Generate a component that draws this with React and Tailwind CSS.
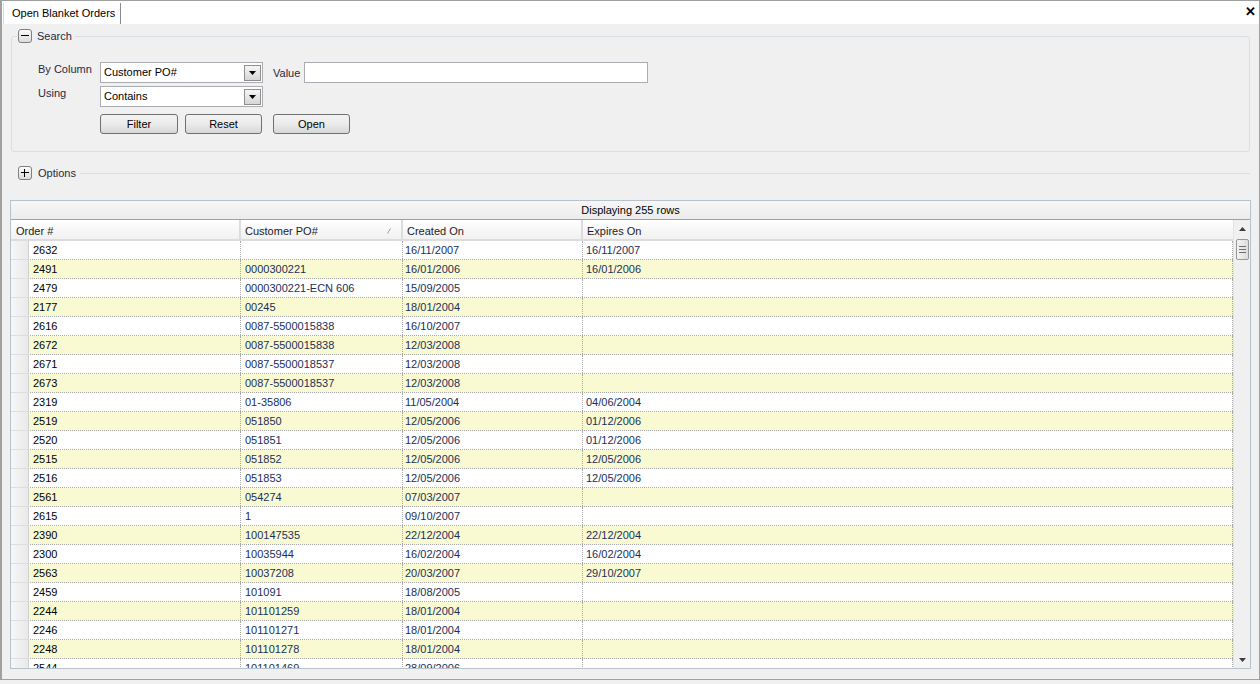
import React from "react";

const rows = [
  ["2632", "", "16/11/2007", "16/11/2007"],
  ["2491", "0000300221", "16/01/2006", "16/01/2006"],
  ["2479", "0000300221-ECN 606", "15/09/2005", ""],
  ["2177", "00245", "18/01/2004", ""],
  ["2616", "0087-5500015838", "16/10/2007", ""],
  ["2672", "0087-5500015838", "12/03/2008", ""],
  ["2671", "0087-5500018537", "12/03/2008", ""],
  ["2673", "0087-5500018537", "12/03/2008", ""],
  ["2319", "01-35806", "11/05/2004", "04/06/2004"],
  ["2519", "051850", "12/05/2006", "01/12/2006"],
  ["2520", "051851", "12/05/2006", "01/12/2006"],
  ["2515", "051852", "12/05/2006", "12/05/2006"],
  ["2516", "051853", "12/05/2006", "12/05/2006"],
  ["2561", "054274", "07/03/2007", ""],
  ["2615", "1", "09/10/2007", ""],
  ["2390", "100147535", "22/12/2004", "22/12/2004"],
  ["2300", "10035944", "16/02/2004", "16/02/2004"],
  ["2563", "10037208", "20/03/2007", "29/10/2007"],
  ["2459", "101091", "18/08/2005", ""],
  ["2244", "101101259", "18/01/2004", ""],
  ["2246", "101101271", "18/01/2004", ""],
  ["2248", "101101278", "18/01/2004", ""],
  ["2544", "101101469", "28/09/2006", ""],
];

function Toggle({ plus }) {
  return (
    <span className="w-[14px] h-[14px] rounded-[3px] border border-[#7f7f7f] bg-gradient-to-b from-[#fbfbfb] to-[#dcdcdc] flex items-center justify-center shrink-0">
      <svg width="8" height="8" viewBox="0 0 8 8" shapeRendering="crispEdges">
        <rect x="0" y="3" width="8" height="1" fill="#000" />
        {plus && <rect x="3" y="0" width="1" height="8" fill="#000" />}
      </svg>
    </span>
  );
}

function Combo({ text }) {
  return (
    <div className="w-[163px] h-[21px] border border-[#abadb3] bg-white flex items-center pl-[3px] pr-[1px]">
      <span className="flex-1 text-black">{text}</span>
      <span className="w-[17px] h-[16px] border border-[#8e8e8e] bg-gradient-to-b from-[#f6f6f6] to-[#d6d6d6] flex items-center justify-center">
        <svg width="7" height="4" viewBox="0 0 7 4">
          <path d="M0 0h7L3.5 4z" fill="#000" />
        </svg>
      </span>
    </div>
  );
}

function Btn({ children, w }) {
  return (
    <button className={`${w} h-[20px] rounded-[3px] border border-[#707070] bg-gradient-to-b from-[#f3f3f3] via-[#ebebeb] to-[#d7d7d7] text-black text-[11px] flex items-center justify-center`}>
      {children}
    </button>
  );
}

export default function App() {
  return (
    <div className="w-[1260px] h-[684px] bg-[#f0f0f0] font-['Liberation_Sans',Arial,sans-serif] text-[11px] overflow-hidden">
      <div className="h-[680px] border-t border-l-2 border-r border-b border-[#a0a0a0] flex flex-col">
        {/* Tab strip */}
        <div className="h-[23px] bg-white flex items-end relative shrink-0">
          <div className="ml-[1px] h-[21px] pl-[8px] pr-[5px] border-l border-[#d8d8d8] border-r border-r-[#8a8a8a] flex items-center text-black text-[11px]">
            Open Blanket Orders
          </div>
          <div className="flex-1" />
          <span className="absolute right-[3px] top-[4px] text-[13px] font-bold leading-none text-black">✕</span>
        </div>

        {/* Content */}
        <div className="flex-1 flex flex-col pl-[9px] pr-[7px]">
          <fieldset className="mt-[5px] border border-[#d5dfe5] rounded-[3px] pt-[19px] pb-[17px] w-[1239px]">
            <legend className="ml-[5px] px-[1px]">
              <span className="flex items-center gap-[5px] h-[14px]">
                <Toggle />
                <span className="text-[#1e2a44] pr-[2px]">Search</span>
              </span>
            </legend>
            <div className="flex flex-col gap-[3px] pl-[26px]">
              <div className="flex items-start h-[21px]">
                <span className="w-[62px] leading-[14px] text-[#1e2a44]">By Column</span>
                <Combo text="Customer PO#" />
                <span className="ml-[10px] w-[31px] h-[21px] flex items-center pt-[2px] text-[#1e2a44]">Value</span>
                <div className="w-[344px] h-[21px] border border-[#abadb3] bg-white" />
              </div>
              <div className="flex items-start h-[21px]">
                <span className="w-[62px] leading-[14px] text-[#1e2a44]">Using</span>
                <Combo text="Contains" />
              </div>
              <div className="flex items-center mt-[4px] ml-[62px] h-[20px]">
                <Btn w="w-[78px]">Filter</Btn>
                <span className="w-[7px]" />
                <Btn w="w-[77px]">Reset</Btn>
                <span className="w-[11px]" />
                <Btn w="w-[77px]">Open</Btn>
              </div>
            </div>
          </fieldset>

          {/* Options */}
          <div className="mt-[14px] flex items-center h-[14px] w-[1239px] pl-[7px]">
            <Toggle plus />
            <span className="ml-[6px] text-[#1e2a44]">Options</span>
            <span className="ml-[4px] flex-1 h-px bg-[#d5dfe5]" />
          </div>

          {/* Grid */}
          <div className="mt-[20px] -ml-[1px] w-[1241px] h-[469px] border border-[#b7c2cc] bg-white flex flex-col overflow-hidden">
            <div className="h-[19px] shrink-0 border-b border-[#a0a0a0] bg-gradient-to-b from-[#f7f7f7] to-[#ececec] flex items-center justify-center text-black">
              Displaying 255 rows
            </div>
            <div className="flex-1 flex min-h-0">
              <div className="flex-1 flex flex-col min-w-0">
                {/* header */}
                <div className="h-[21px] shrink-0 flex bg-gradient-to-b from-white to-[#f1f1f1] border-b-2 border-[#dcdcdc] text-[#1c1c1c]">
                  <div className="w-[230px] pl-[5px] pt-[3px] flex items-center border-r-2 border-[#dcdcdc]">Order #</div>
                  <div className="w-[162px] pl-[4px] pt-[3px] flex items-center border-r-2 border-[#dcdcdc] relative">
                    Customer PO#
                    <svg className="absolute right-[10px] top-[8px]" width="4" height="6" viewBox="0 0 4 6">
                      <path d="M0.5 5.5L3.5 0.5" stroke="#9a9a9a" strokeWidth="1" />
                    </svg>
                  </div>
                  <div className="w-[180px] pl-[4px] pt-[3px] flex items-center border-r-2 border-[#dcdcdc]">Created On</div>
                  <div className="flex-1 pl-[4px] pt-[3px] flex items-center">Expires On</div>
                </div>
                {/* rows */}
                <div className="flex-1 overflow-hidden">
                  {rows.map((r, i) => (
                    <div
                      key={i}
                      className={`h-[19px] flex border-b border-dotted border-[#a8a8a8] ${i % 2 === 1 ? "bg-[#fafad2]" : "bg-white"}`}
                    >
                      <div className="w-[18px] shrink-0 bg-gradient-to-r from-[#f7f7f7] to-[#e9e9e9] border-r border-[#d0d0d0] -mb-px border-b border-b-[#dedede]" />
                      <div className="w-[212px] shrink-0 pl-[4px] flex items-center border-r border-dotted border-[#a8a8a8] text-black">
                        {r[0]}
                      </div>
                      <div className="w-[162px] shrink-0 pl-[4px] flex items-center border-r border-dotted border-[#a8a8a8] text-[#1a2f58]">
                        {r[1]}
                      </div>
                      <div className="w-[180px] shrink-0 pl-[2px] flex items-center border-r border-dotted border-[#a8a8a8] text-[#1a2f58]">
                        {r[2]}
                      </div>
                      <div className="flex-1 pl-[3px] flex items-center border-r border-dotted border-[#a8a8a8] text-[#1a2f58]">
                        {r[3]}
                      </div>
                    </div>
                  ))}
                </div>
              </div>
              {/* scrollbar */}
              <div className="w-[17px] shrink-0 bg-[#f0f0f0] border-l border-[#e4e4e4] flex flex-col items-center">
                <div className="h-[17px] w-full flex items-center justify-center">
                  <svg width="7" height="4" viewBox="0 0 7 4">
                    <path d="M3.5 0L7 4H0z" fill="#3c3c3c" />
                  </svg>
                </div>
                <div className="mt-[2px] w-[13px] h-[21px] rounded-[2px] border border-[#979797] bg-gradient-to-r from-[#f4f4f4] to-[#dcdcdc] flex flex-col items-center justify-center gap-[2px]">
                  <span className="w-[7px] h-px bg-[#6e6e6e]" />
                  <span className="w-[7px] h-px bg-[#6e6e6e]" />
                  <span className="w-[7px] h-px bg-[#6e6e6e]" />
                </div>
                <div className="flex-1" />
                <div className="h-[17px] w-full flex items-center justify-center">
                  <svg width="7" height="4" viewBox="0 0 7 4">
                    <path d="M0 0h7L3.5 4z" fill="#3c3c3c" />
                  </svg>
                </div>
              </div>
            </div>
          </div>
        </div>
      </div>
    </div>
  );
}
